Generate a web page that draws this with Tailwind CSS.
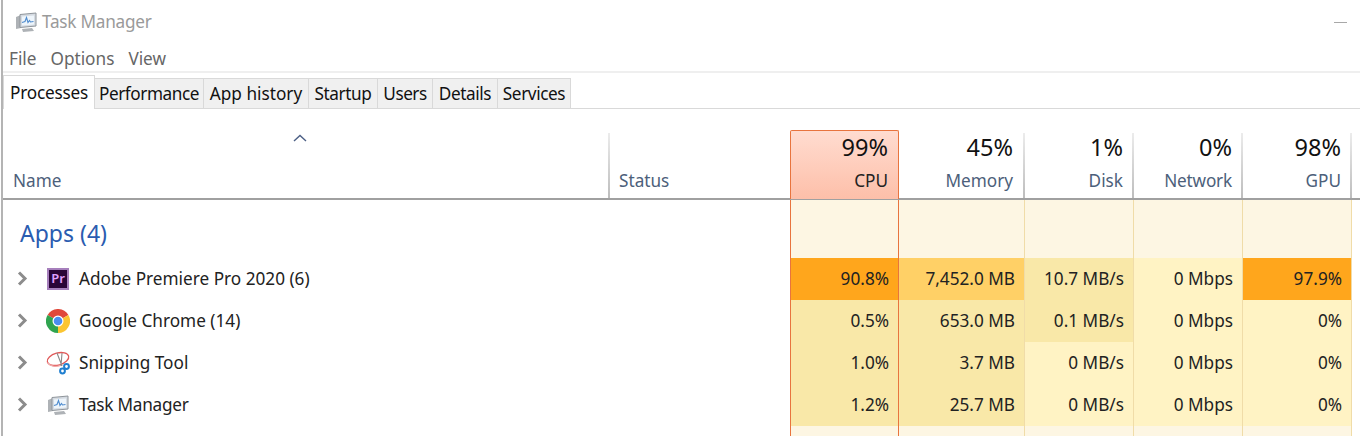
<!DOCTYPE html>
<html lang="en">
<head>
<meta charset="utf-8">
<title>Task Manager</title>
<script src="https://cdn.jsdelivr.net/npm/@tailwindcss/browser@4"></script>
</head>
<body class="bg-white overflow-hidden">
<div class="w-[1360px] h-[436px] overflow-hidden pl-[1px] font-['Noto_Sans','Open_Sans',sans-serif] text-[17.2px] leading-none text-[#222]">
<div class="h-full border-l-2 border-[#b4b4b4] flex flex-col">

  <!-- Title bar -->
  <div class="h-[44px] flex items-center pl-[12px] pr-[12px] shrink-0">
    <svg class="w-[22px] h-[22px] mr-[5px]" viewBox="0 0 22 22">
      <path d="M1 6l5-2v13l-5 1z" fill="#aeb2b6"/>
      <path d="M5 3.500l16-1.500v13l-16 1.500z" fill="#d5dbe2" stroke="#8f959b"/>
      <path d="M7 5.500l12-1v9l-12 1z" fill="#eef5fb"/>
      <path d="M7 11.500l3-1 1.500-4 1.500 5 1.500-2 1 1.500 3-.5" fill="none" stroke="#4f8ccf" stroke-width="1.100"/>
      <path d="M7 18l10-1 2 3-11 1z" fill="#aeb2b6"/>
    </svg>
    <span class="text-[#9a9a9a] tracking-[-0.25px]">Task Manager</span>
    <span class="ml-auto mr-[1px] w-[13px] h-[1px] bg-[#a8a8a8] block"></span>
  </div>

  <!-- Menu -->
  <div class="h-[29px] flex items-center pl-[6px] gap-[14px] text-[#666] border-b-2 border-[#efefef] shrink-0 pt-[3px]">
    <span>File</span><span>Options</span><span>View</span>
  </div>

  <!-- Tabs -->
  <div class="h-[36px] flex items-end border-b border-[#d9d9d9] shrink-0 text-[#111]">
    <div class="h-[34px] bg-white border border-b-0 border-[#d9d9d9] w-[92px] flex items-center justify-center tracking-[-0.2px] -mb-[1px]">Processes</div>
    <div class="h-[30px] bg-[#f0f0f0] border-t border-r border-[#d9d9d9] w-[109px] flex items-center justify-center pt-[1px] tracking-[-0.45px]">Performance</div>
    <div class="h-[30px] bg-[#f0f0f0] border-t border-r border-[#d9d9d9] w-[105px] flex items-center justify-center pt-[1px]">App history</div>
    <div class="h-[30px] bg-[#f0f0f0] border-t border-r border-[#d9d9d9] w-[69px] flex items-center justify-center pt-[1px] tracking-[-0.4px]">Startup</div>
    <div class="h-[30px] bg-[#f0f0f0] border-t border-r border-[#d9d9d9] w-[55px] flex items-center justify-center pt-[1px] tracking-[-0.5px]">Users</div>
    <div class="h-[30px] bg-[#f0f0f0] border-t border-r border-[#d9d9d9] w-[65px] flex items-center justify-center pt-[1px] tracking-[-0.4px]">Details</div>
    <div class="h-[30px] bg-[#f0f0f0] border-t border-r border-[#d9d9d9] w-[73px] flex items-center justify-center pt-[1px] tracking-[-0.4px]">Services</div>
  </div>

  <!-- Table header -->
  <div class="mt-[21px] h-[70px] border-b-2 border-[#a0a0a0] grid grid-cols-[606px_181px_109px_126px_109px_109px_109px] shrink-0 -mr-[1px] text-[#4c607a]">
    <div class="flex h-[68px] ml-[1px] -mr-[1px]">
      <div class="flex-1 flex flex-col pl-[9px] relative">
        <svg class="absolute left-[289px] top-[4px] w-[14px] h-[8px]" viewBox="0 0 14 8"><path d="M1 7l6-5.500 6 5.500" fill="none" stroke="#4c5f85" stroke-width="1.400"/></svg>
        <span class="mt-auto mb-[9px]">Name</span>
      </div>
      <div class="w-[2px] mt-[3px] bg-linear-to-b from-[#ececec] to-[#bdbdbd]"></div>
    </div>
    <div class="flex h-[68px]">
      <div class="flex-1 flex flex-col pl-[10px]"><span class="mt-auto mb-[9px]">Status</span></div>
    </div>
    <div class="h-[69px] border border-b-0 border-[#e8743e] rounded-t-[2px] bg-linear-to-b from-[#ffdcd0] to-[#fdbfa9] flex flex-col items-end pr-[10px] text-[#222]">
      <span class="text-[23.5px] text-[#111] mt-[5px]">99%</span>
      <span class="mt-auto mb-[10px]">CPU</span>
    </div>
    <div class="flex h-[68px]">
      <div class="flex-1 flex flex-col items-end pr-[10px]"><span class="text-[23.5px] text-[#111] mt-[6px]">45%</span><span class="mt-auto mb-[9px]">Memory</span></div>
      <div class="w-[2px] mt-[3px] bg-linear-to-b from-[#ececec] to-[#bdbdbd]"></div>
    </div>
    <div class="flex h-[68px]">
      <div class="flex-1 flex flex-col items-end pr-[9px]"><span class="text-[23.5px] text-[#111] mt-[6px]">1%</span><span class="mt-auto mb-[9px]">Disk</span></div>
      <div class="w-[2px] mt-[3px] bg-linear-to-b from-[#ececec] to-[#bdbdbd]"></div>
    </div>
    <div class="flex h-[68px]">
      <div class="flex-1 flex flex-col items-end pr-[9px]"><span class="text-[23.5px] text-[#111] mt-[6px]">0%</span><span class="mt-auto mb-[9px] tracking-[-0.2px]">Network</span></div>
      <div class="w-[2px] mt-[3px] bg-linear-to-b from-[#ececec] to-[#bdbdbd]"></div>
    </div>
    <div class="flex h-[68px]">
      <div class="flex-1 flex flex-col items-end pr-[9px]"><span class="text-[23.5px] text-[#111] mt-[6px]">98%</span><span class="mt-auto mb-[9px]">GPU</span></div>
      <div class="w-[2px] mt-[3px] bg-linear-to-b from-[#ececec] to-[#bdbdbd]"></div>
    </div>
  </div>

  <!-- Group row -->
  <div class="h-[58px] grid grid-cols-[606px_181px_109px_126px_109px_109px_109px] shrink-0">
    <div class="pl-[17px] flex items-center text-[23px] text-[#2a5cb0] pt-[8px]">Apps (4)</div>
    <div></div>
    <div class="bg-[#fdf6e3] border-x border-[#e8743e]"></div>
    <div class="bg-[#fdf6e3] border-r border-[#f0dca8]"></div>
    <div class="bg-[#fdf6e3] border-r border-[#f0dca8]"></div>
    <div class="bg-[#fdf6e3] border-r border-[#f0dca8]"></div>
    <div class="bg-[#fdf6e3] border-r border-[#f0dca8]"></div>
  </div>

  <!-- Premiere -->
  <div class="h-[42px] grid grid-cols-[606px_181px_109px_126px_109px_109px_109px] shrink-0 text-[#222]">
    <div class="flex items-center pb-[1px]">
      <svg class="ml-[14px] w-[11px] h-[15px]" viewBox="0 0 11 15"><path d="M2 1.500l6 6-6 6" fill="none" stroke="#8c8c8c" stroke-width="3"/></svg>
      <div class="ml-[18px] w-[24px] flex justify-center">
        <div class="w-[22px] h-[22px] bg-[#2a0538] border-2 border-[#a67fbc] flex items-center justify-center text-[13px] text-[#e0a0ff] font-semibold">Pr</div>
      </div>
      <span class="ml-[9px]">Adobe Premiere Pro 2020 (6)</span>
    </div>
    <div></div>
    <div class="bg-[#ffa61c] border-x border-[#e8743e] flex items-center justify-end pr-[9px] pb-[1px]">90.8%</div>
    <div class="bg-[#ffd066] border-r border-[#f0dca8] flex items-center justify-end pr-[9px] pb-[1px]">7,452.0 MB</div>
    <div class="bg-[#f9e8a8] border-r border-[#f0dca8] flex items-center justify-end pr-[9px] pb-[1px]">10.7 MB/s</div>
    <div class="bg-[#fff3c4] border-r border-[#f0dca8] flex items-center justify-end pr-[9px] pb-[1px]">0 Mbps</div>
    <div class="bg-[#ffa61c] border-r border-[#f0dca8] flex items-center justify-end pr-[9px] pb-[1px]">97.9%</div>
  </div>

  <!-- Chrome -->
  <div class="h-[42px] grid grid-cols-[606px_181px_109px_126px_109px_109px_109px] shrink-0 text-[#222]">
    <div class="flex items-center pb-[1px]">
      <svg class="ml-[14px] w-[11px] h-[15px]" viewBox="0 0 11 15"><path d="M2 1.500l6 6-6 6" fill="none" stroke="#8c8c8c" stroke-width="3"/></svg>
      <div class="ml-[18px] w-[24px] flex justify-center">
        <svg class="w-[24px] h-[24px]" viewBox="0 0 24 24">
          <path d="M12 12L1.600 6A12 12 0 0 1 22.400 6z" fill="#e0483a"/>
          <path d="M12 12L22.400 6A12 12 0 0 1 12 24z" fill="#fbc531"/>
          <path d="M12 12L12 24A12 12 0 0 1 1.600 6z" fill="#2fa44f"/>
          <circle cx="12" cy="12" r="5.500" fill="#fff"/>
          <circle cx="12" cy="12" r="4.300" fill="#4a8df0"/>
        </svg>
      </div>
      <span class="ml-[9px]">Google Chrome (14)</span>
    </div>
    <div></div>
    <div class="bg-[#f9e8a8] border-x border-[#e8743e] flex items-center justify-end pr-[9px] pb-[1px]">0.5%</div>
    <div class="bg-[#f9e8a8] border-r border-[#f0dca8] flex items-center justify-end pr-[9px] pb-[1px]">653.0 MB</div>
    <div class="bg-[#f9e8a8] border-r border-[#f0dca8] flex items-center justify-end pr-[9px] pb-[1px]">0.1 MB/s</div>
    <div class="bg-[#fff3c4] border-r border-[#f0dca8] flex items-center justify-end pr-[9px] pb-[1px]">0 Mbps</div>
    <div class="bg-[#fff3c4] border-r border-[#f0dca8] flex items-center justify-end pr-[9px] pb-[1px]">0%</div>
  </div>

  <!-- Snipping Tool -->
  <div class="h-[42px] grid grid-cols-[606px_181px_109px_126px_109px_109px_109px] shrink-0 text-[#222]">
    <div class="flex items-center pb-[1px]">
      <svg class="ml-[14px] w-[11px] h-[15px]" viewBox="0 0 11 15"><path d="M2 1.500l6 6-6 6" fill="none" stroke="#8c8c8c" stroke-width="3"/></svg>
      <div class="ml-[18px] w-[24px] flex justify-center">
        <svg class="w-[24px] h-[24px]" viewBox="0 0 24 24">
          <ellipse cx="12" cy="8" rx="11" ry="6" transform="rotate(-15 12 8)" fill="#fff" stroke="#e05a5a" stroke-width="1.300"/>
          <path d="M1.500 11.500c2 3.500 8 5 13 3" fill="none" stroke="#f0a8a8" stroke-width="1.300"/>
          <path d="M11 2l5 13M16 2l-1 13" stroke="#8a8a8a" stroke-width="1.100"/>
          <circle cx="20.500" cy="15.500" r="2.400" fill="none" stroke="#1f7fd0" stroke-width="2"/>
          <circle cx="16.500" cy="20" r="2.400" fill="none" stroke="#1f7fd0" stroke-width="2"/>
        </svg>
      </div>
      <span class="ml-[9px]">Snipping Tool</span>
    </div>
    <div></div>
    <div class="bg-[#f9e8a8] border-x border-[#e8743e] flex items-center justify-end pr-[9px] pb-[1px]">1.0%</div>
    <div class="bg-[#f9e8a8] border-r border-[#f0dca8] flex items-center justify-end pr-[9px] pb-[1px]">3.7 MB</div>
    <div class="bg-[#fff3c4] border-r border-[#f0dca8] flex items-center justify-end pr-[9px] pb-[1px]">0 MB/s</div>
    <div class="bg-[#fff3c4] border-r border-[#f0dca8] flex items-center justify-end pr-[9px] pb-[1px]">0 Mbps</div>
    <div class="bg-[#fff3c4] border-r border-[#f0dca8] flex items-center justify-end pr-[9px] pb-[1px]">0%</div>
  </div>

  <!-- Task Manager -->
  <div class="h-[42px] grid grid-cols-[606px_181px_109px_126px_109px_109px_109px] shrink-0 text-[#222]">
    <div class="flex items-center pb-[1px]">
      <svg class="ml-[14px] w-[11px] h-[15px]" viewBox="0 0 11 15"><path d="M2 1.500l6 6-6 6" fill="none" stroke="#8c8c8c" stroke-width="3"/></svg>
      <div class="ml-[18px] w-[24px] flex justify-center">
        <svg class="w-[22px] h-[22px]" viewBox="0 0 22 22">
          <path d="M1 6l5-2v13l-5 1z" fill="#aeb2b6"/>
          <path d="M5 3.500l16-1.500v13l-16 1.500z" fill="#d5dbe2" stroke="#8f959b"/>
          <path d="M7 5.500l12-1v9l-12 1z" fill="#eef5fb"/>
          <path d="M7 11.500l3-1 1.500-4 1.500 5 1.500-2 1 1.500 3-.5" fill="none" stroke="#4f8ccf" stroke-width="1.100"/>
          <path d="M7 18l10-1 2 3-11 1z" fill="#aeb2b6"/>
        </svg>
      </div>
      <span class="ml-[9px] tracking-[-0.25px]">Task Manager</span>
    </div>
    <div></div>
    <div class="bg-[#f9e8a8] border-x border-[#e8743e] flex items-center justify-end pr-[9px] pb-[1px]">1.2%</div>
    <div class="bg-[#f9e8a8] border-r border-[#f0dca8] flex items-center justify-end pr-[9px] pb-[1px]">25.7 MB</div>
    <div class="bg-[#fff3c4] border-r border-[#f0dca8] flex items-center justify-end pr-[9px] pb-[1px]">0 MB/s</div>
    <div class="bg-[#fff3c4] border-r border-[#f0dca8] flex items-center justify-end pr-[9px] pb-[1px]">0 Mbps</div>
    <div class="bg-[#fff3c4] border-r border-[#f0dca8] flex items-center justify-end pr-[9px] pb-[1px]">0%</div>
  </div>

  <!-- Partial next row -->
  <div class="h-[10px] grid grid-cols-[606px_181px_109px_126px_109px_109px_109px] shrink-0">
    <div></div><div></div>
    <div class="bg-[#fdf6e3] border-x border-[#e8743e]"></div>
    <div class="bg-[#fdf6e3] border-r border-[#f0dca8]"></div>
    <div class="bg-[#fdf6e3] border-r border-[#f0dca8]"></div>
    <div class="bg-[#fdf6e3] border-r border-[#f0dca8]"></div>
    <div class="bg-[#fdf6e3] border-r border-[#f0dca8]"></div>
  </div>
</div>
</div>
</body>
</html>
